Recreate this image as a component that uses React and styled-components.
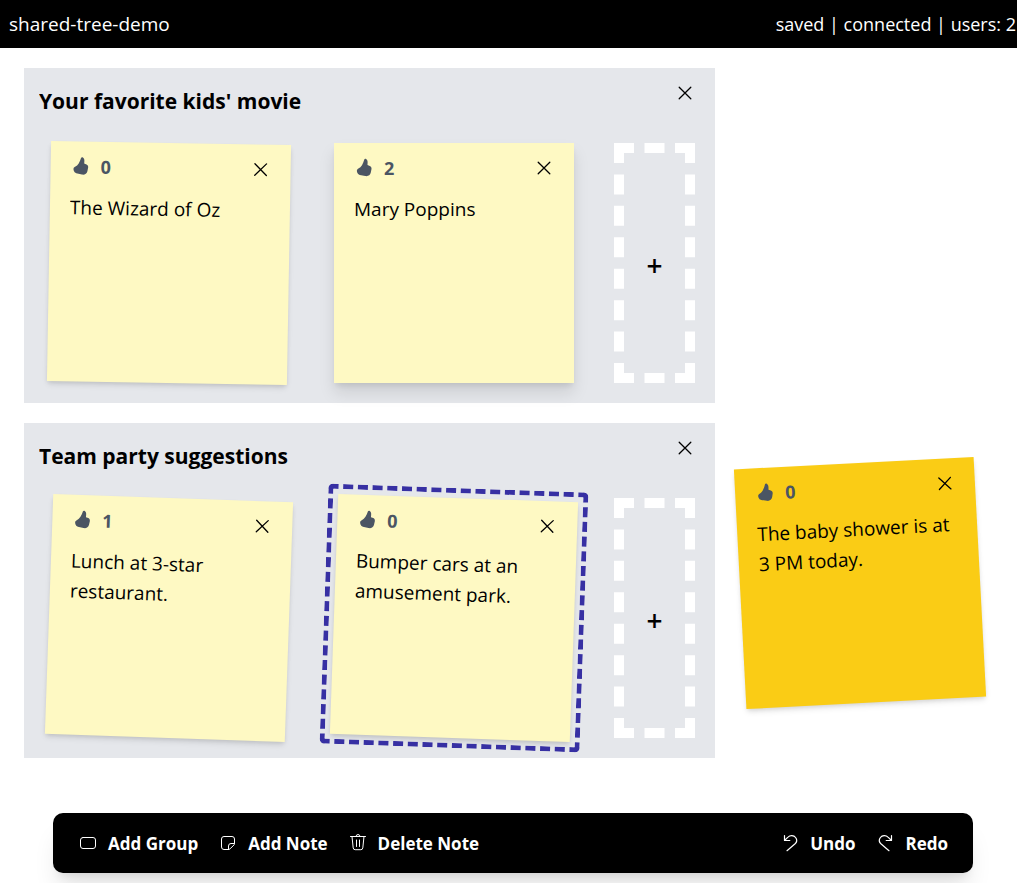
import React from "react";
import styled, { createGlobalStyle } from "styled-components";

const GlobalStyle = createGlobalStyle`
  *, *::before, *::after { box-sizing: border-box; }
  body { margin: 0; background: #fff; color: #000; font-family: "Segoe UI", "Open Sans", "Noto Sans", sans-serif; }
  button, input, textarea { font: inherit; color: inherit; }
`;

const Page = styled.div`
  position: relative;
  display: flex;
  flex-direction: column;
  min-height: 100vh;
  overflow: hidden;
`;

const Header = styled.header`
  display: flex;
  align-items: center;
  justify-content: space-between;
  height: 48px;
  padding: 0 1px 0 9px;
  background: #000;
  color: #fff;
  font-size: 19px;
  white-space: nowrap;
`;

const Status = styled.span`
  font-size: 18px;
`;

const Canvas = styled.main`
  flex: 1;
  display: flex;
  flex-direction: column;
  align-items: flex-start;
  gap: 20px;
  padding: 20px 24px;
`;

const Group = styled.section`
  display: flex;
  flex-direction: column;
  padding: 10px 20px 20px 0;
  background: #e5e7eb;
`;

const GroupHead = styled.div`
  display: flex;
  align-items: flex-start;
  justify-content: space-between;
  height: 65px;
  padding-left: 15px;
`;

const GroupTitle = styled.input`
  width: 400px;
  height: 46px;
  padding: 0;
  border: 0;
  background: transparent;
  font-size: 21px;
  font-weight: 700;
`;

const Items = styled.div`
  display: flex;
`;

const Slot = styled.div`
  padding: 0 20px 0 25px;
`;

const Note = styled.article`
  position: relative;
  display: flex;
  flex-direction: column;
  width: 240px;
  height: 240px;
  padding: 11px 20px 20px;
  background: ${(p) => (p.$strong ? "#facc15" : "#fef9c3")};
  box-shadow: ${(p) =>
    p.$raised
      ? "0 10px 15px 0 rgba(0,0,0,.1), 0 4px 6px -2px rgba(0,0,0,.1)"
      : "0 4px 6px -1px rgba(0,0,0,.1), 0 2px 4px -1px rgba(0,0,0,.1)"};
  transform: rotate(${(p) => p.$angle}deg);
`;

const Selection = styled.div`
  position: absolute;
  inset: -10px;
  border: 5px dashed #3730a3;
  border-radius: 5px;
  pointer-events: none;
`;

const FreeNote = styled.div`
  position: absolute;
  left: 740px;
  top: 463px;
`;

const NoteBar = styled.div`
  display: flex;
  align-items: center;
  justify-content: space-between;
  height: 28px;
`;

const LikeButton = styled.button`
  display: flex;
  align-items: center;
  gap: 10px;
  padding: 0;
  border: 0;
  background: none;
  color: #4b5563;
  font-size: 18px;
  font-weight: 700;
  line-height: 28px;
`;

const IconButton = styled.button`
  display: flex;
  padding: 5px 0;
  border: 0;
  background: none;
`;

const NoteText = styled.textarea`
  flex: 1;
  width: 100%;
  margin-top: 12px;
  padding: 0;
  border: 0;
  outline: 0;
  resize: none;
  overflow: hidden;
  background: transparent;
  font-size: 19px;
  line-height: 30px;
`;

const AddSlot = styled.div`
  padding-left: 20px;
`;

const AddButton = styled.button`
  width: 81px;
  height: 240px;
  padding: 4px 0 0;
  border: 10px dashed #fff;
  background: transparent;
  font-size: 28px;
  font-weight: 600;
`;

const Dock = styled.footer`
  padding: 0 44px 10px 53px;
`;

const Toolbar = styled.div`
  display: flex;
  align-items: center;
  justify-content: space-between;
  height: 60px;
  padding: 0 25px;
  border-radius: 10px;
  background: #000;
  color: #fff;
  box-shadow: 0 20px 25px -5px rgba(0,0,0,.1), 0 8px 10px -6px rgba(0,0,0,.1);
`;

const ToolSet = styled.div`
  display: flex;
  gap: 20px;
`;

const ToolButton = styled.button`
  display: flex;
  align-items: center;
  gap: 10px;
  padding: 0;
  border: 0;
  background: none;
  font-size: 17px;
  font-weight: 700;
  white-space: nowrap;
`;

const Line = ({ children, width = 1 }) => (
  <svg width="20" height="20" viewBox="0 0 20 20" fill="none" stroke="currentColor" strokeWidth={width} strokeLinecap="round" strokeLinejoin="round" aria-hidden="true">
    {children}
  </svg>
);

const CloseIcon = () => (
  <Line width={1.3}><path d="M4.2 4.2 15.8 15.8M15.8 4.2 4.2 15.8" /></Line>
);
const GroupIcon = () => (
  <Line><rect x="2.5" y="4.5" width="15" height="11" rx="2.5" /></Line>
);
const NoteIcon = () => (
  <Line>
    <path d="M10.6 16.5H6A2.5 2.5 0 0 1 3.5 14V6A2.5 2.5 0 0 1 6 3.5h8A2.5 2.5 0 0 1 16.5 6v4.6a2 2 0 0 1-.6 1.4L12 15.9a2 2 0 0 1-1.4.6Z" />
    <path d="M16.4 10.5H13a2.5 2.5 0 0 0-2.5 2.5v3.4" />
  </Line>
);
const TrashIcon = () => (
  <Line>
    <path d="M2.5 3.5h15M8 3.5a2 2 0 0 1 4 0M4 3.5l1.200 11.400a2 2 0 0 0 2 1.800h5.600a2 2 0 0 0 2-1.800L16 3.500M8.500 7v6.500M11.500 7v6.500" />
  </Line>
);
const UndoIcon = () => (
  <Line width={1.2}>
    <path d="M4.5 2.5v5h5.300M4.700 7.300 8 4.100a5 5 0 0 1 7.600 .4a4.800 4.800 0 0 1-.5 6.300L7 17.700" />
  </Line>
);
const RedoIcon = () => (
  <Line width={1.2}>
    <path d="M16.5 2.5v5h-5.300M16.300 7.300 13 4.100a5 5 0 0 0-7.600 .4a4.800 4.800 0 0 0 .5 6.300L14 17.700" />
  </Line>
);
const ThumbIcon = () => (
  <svg width="20" height="20" viewBox="0 0 20 20" fill="currentColor" aria-hidden="true">
    <path d="M10.300 1.400c.3-.7 1.200-.8 1.800-.4 1.200.8 1.600 2.200 1.500 3.600L13.500 7.100l2.300 .9c1.300.5 1.900 1.600 1.700 3l-.7 3.600c-.5 2.600-2.900 4-5.400 3.500l-5.700-1.200a3.300 3.300 0 0 1-2.500-2.400l-.3-1.200c-.2-1.200.4-2.300 1.500-2.800 3-1.300 4.600-4.800 5.900-9.100Z" />
  </svg>
);

function StickyNote({ text, likes, angle, strong, raised, selected }) {
  return (
    <Note $angle={angle} $strong={strong} $raised={raised}>
      <NoteBar>
        <LikeButton aria-label={`Like, ${likes}`}>
          <ThumbIcon />
          {likes}
        </LikeButton>
        <IconButton aria-label="Delete note"><CloseIcon /></IconButton>
      </NoteBar>
      <NoteText aria-label="Note text" defaultValue={text} spellCheck={false} />
      {selected && <Selection />}
    </Note>
  );
}

const groups = [
  {
    title: "Your favorite kids' movie",
    notes: [
      { text: "The Wizard of Oz", likes: 0, angle: 1 },
      { text: "Mary Poppins", likes: 2, angle: 0, raised: true },
    ],
  },
  {
    title: "Team party suggestions",
    notes: [
      { text: "Lunch at 3-star restaurant.", likes: 1, angle: 2 },
      { text: "Bumper cars at an amusement park.", likes: 0, angle: 2, selected: true },
    ],
  },
];

export default function App() {
  return (
    <>
      <GlobalStyle />
      <Page>
        <Header>
          <span>shared-tree-demo</span>
          <Status>saved | connected | users: 2</Status>
        </Header>
        <Canvas>
          {groups.map((group) => (
            <Group key={group.title}>
              <GroupHead>
                <GroupTitle aria-label="Group title" defaultValue={group.title} spellCheck={false} />
                <IconButton aria-label="Delete group"><CloseIcon /></IconButton>
              </GroupHead>
              <Items>
                {group.notes.map((note) => (
                  <Slot key={note.text}><StickyNote {...note} /></Slot>
                ))}
                <AddSlot><AddButton aria-label="Add note to group">+</AddButton></AddSlot>
              </Items>
            </Group>
          ))}
        </Canvas>
        <FreeNote>
          <StickyNote text="The baby shower is at 3 PM today." likes={0} angle={-3} strong />
        </FreeNote>
        <Dock>
          <Toolbar>
            <ToolSet>
              <ToolButton><GroupIcon />Add Group</ToolButton>
              <ToolButton><NoteIcon />Add Note</ToolButton>
              <ToolButton><TrashIcon />Delete Note</ToolButton>
            </ToolSet>
            <ToolSet>
              <ToolButton><UndoIcon />Undo</ToolButton>
              <ToolButton><RedoIcon />Redo</ToolButton>
            </ToolSet>
          </Toolbar>
        </Dock>
      </Page>
    </>
  );
}
